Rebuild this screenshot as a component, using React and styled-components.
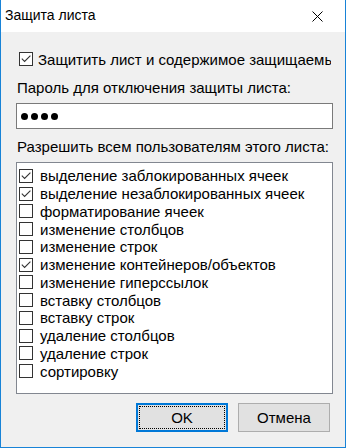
import React from 'react';
import styled, { createGlobalStyle } from 'styled-components';

let GlobalStyle = createGlobalStyle`
  html, body {
    margin: 0;
    padding: 0;
    background: #ffffff;
  }
  * {
    box-sizing: border-box;
  }
`

let Window = styled.div`
  width: 346px;
  height: 448px;
  border: 1px solid #1883d7;
  border-top: none;
  background-color: #f0f0f0;
  display: flex;
  flex-direction: column;
  font-family: 'Liberation Sans', Arial, sans-serif;
  font-size: 15px;
  color: #000;
  overflow: hidden;
`

let TitleBar = styled.div`
  height: 32px;
  background-color: #fff;
  display: flex;
  align-items: center;
  justify-content: space-between;
  padding: 0 22px 0 4px;
  flex-shrink: 0;
`

let Title = styled.span`
  font-size: 14px;
  margin-top: -2px;
`

let Body = styled.div`
  display: flex;
  flex-direction: column;
  padding: 0 14px 0 14px;
`

let CheckRow = styled.label`
  display: flex;
  align-items: center;
  height: ${props => props.h || 18}px;
  gap: ${props => props.gap || 5}px;
  white-space: nowrap;
  overflow: hidden;
  margin-top: ${props => props.mt || 0}px;
  padding-left: ${props => props.pl || 0}px;
`

let Box = styled.span`
  width: 14px;
  height: 14px;
  flex-shrink: 0;
  border: 1px solid #333;
  background-color: #fff;
  display: flex;
  align-items: center;
  justify-content: center;
`

let Label = styled.div`
  height: 18px;
  line-height: 18px;
  padding-left: 2px;
  margin-top: ${props => props.mt}px;
`

let PasswordInput = styled.div`
  margin-top: 6px;
  height: 26px;
  width: 317px;
  margin-left: 1px;
  border: 1px solid #7a7a7a;
  background-color: #fff;
  display: flex;
  align-items: center;
  gap: 3px;
  padding-left: 4px;
`

let Dot = styled.span`
  width: 7px;
  height: 7px;
  border-radius: 50%;
  background-color: #000;
`

let ListBox = styled.div`
  margin-top: 6px;
  margin-left: 1px;
  width: 317px;
  height: 232px;
  border: 1px solid #828790;
  background-color: #fff;
  padding-top: 4px;
  display: flex;
  flex-direction: column;
`

let ButtonRow = styled.div`
  display: flex;
  justify-content: flex-end;
  gap: 10px;
  margin-top: 9px;
  padding-right: 1px;
`

let Button = styled.button`
  width: 92px;
  height: 29px;
  font-family: 'Liberation Sans', Arial, sans-serif;
  font-size: 15px;
  color: #000;
  background-color: #e1e1e1;
  border: 1px solid #adadad;
  padding: 0;
  ${props => props.primary && `
    border: 2px solid #0078d7;
    outline: 1px dotted #000;
    outline-offset: -4px;
  `}
`

function Check({ checked }) {
  return (
    <Box>
      {checked && (
        <svg width="12" height="12" viewBox="0 0 12 12">
          <polyline points="1.8,5.6 4.6,8.4 10.4,2.6" fill="none" stroke="#333" strokeWidth="1.1" />
        </svg>
      )}
    </Box>
  )
}

let items = [
  ['выделение заблокированных ячеек', true],
  ['выделение незаблокированных ячеек', true],
  ['форматирование ячеек', false],
  ['изменение столбцов', false],
  ['изменение строк', false],
  ['изменение контейнеров/объектов', true],
  ['изменение гиперссылок', false],
  ['вставку столбцов', false],
  ['вставку строк', false],
  ['удаление столбцов', false],
  ['удаление строк', false],
  ['сортировку', false],
]

export default function App() {
  return (
    <>
      <GlobalStyle />
      <Window>
        <TitleBar>
          <Title>Защита листа</Title>
          <svg width="11" height="11" viewBox="0 0 11 11">
            <path d="M0.5 0.5 L10.5 10.5 M10.5 0.5 L0.5 10.5" stroke="#000" strokeWidth="1" fill="none" />
          </svg>
        </TitleBar>
        <Body>
          <CheckRow mt={18} pl={4} gap={5}>
            <Check checked />
            Защитить лист и содержимое защищаемых ячеек
          </CheckRow>
          <Label mt={11}>Пароль для отключения защиты листа:</Label>
          <PasswordInput>
            <Dot /><Dot /><Dot /><Dot />
          </PasswordInput>
          <Label mt={9}>Разрешить всем пользователям этого листа:</Label>
          <ListBox>
            {items.map(([text, checked]) => (
              <CheckRow key={text} h={17.75} pl={2} gap={7}>
                <Check checked={checked} />
                {text}
              </CheckRow>
            ))}
          </ListBox>
          <ButtonRow>
            <Button primary>OK</Button>
            <Button>Отмена</Button>
          </ButtonRow>
        </Body>
      </Window>
    </>
  )
}
